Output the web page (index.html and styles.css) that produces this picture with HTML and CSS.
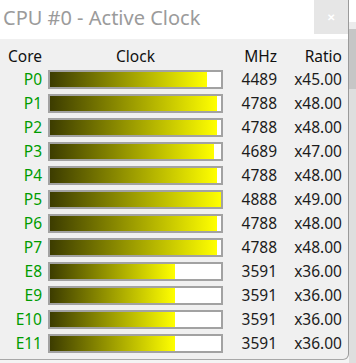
FILE: index.html
```html
<!DOCTYPE html>
<html lang="en">
<head>
    <meta charset="UTF-8">
    <title>CPU #0 - Active Clock</title>
    <link rel="stylesheet" href="styles.css">
</head>
<body>
    <div class="window">
        <div class="titlebar">
            <span class="title">CPU #0 - Active Clock</span>
            <span class="close">&#x2715;</span>
        </div>
        <div class="grid">
            <div class="head core">Core</div>
            <div class="head clock">Clock</div>
            <div class="head num">MHz</div>
            <div class="head num">Ratio</div>

            <div class="core">P0</div>
            <div class="bar"><div class="fill" style="width: 91.6%"></div></div>
            <div class="num">4489</div>
            <div class="num">x45.00</div>

            <div class="core">P1</div>
            <div class="bar"><div class="fill" style="width: 97.7%"></div></div>
            <div class="num">4788</div>
            <div class="num">x48.00</div>

            <div class="core">P2</div>
            <div class="bar"><div class="fill" style="width: 97.7%"></div></div>
            <div class="num">4788</div>
            <div class="num">x48.00</div>

            <div class="core">P3</div>
            <div class="bar"><div class="fill" style="width: 95.7%"></div></div>
            <div class="num">4689</div>
            <div class="num">x47.00</div>

            <div class="core">P4</div>
            <div class="bar"><div class="fill" style="width: 97.7%"></div></div>
            <div class="num">4788</div>
            <div class="num">x48.00</div>

            <div class="core">P5</div>
            <div class="bar"><div class="fill" style="width: 99.8%"></div></div>
            <div class="num">4888</div>
            <div class="num">x49.00</div>

            <div class="core">P6</div>
            <div class="bar"><div class="fill" style="width: 97.7%"></div></div>
            <div class="num">4788</div>
            <div class="num">x48.00</div>

            <div class="core">P7</div>
            <div class="bar"><div class="fill" style="width: 97.7%"></div></div>
            <div class="num">4788</div>
            <div class="num">x48.00</div>

            <div class="core">E8</div>
            <div class="bar"><div class="fill" style="width: 73.3%"></div></div>
            <div class="num">3591</div>
            <div class="num">x36.00</div>

            <div class="core">E9</div>
            <div class="bar"><div class="fill" style="width: 73.3%"></div></div>
            <div class="num">3591</div>
            <div class="num">x36.00</div>

            <div class="core">E10</div>
            <div class="bar"><div class="fill" style="width: 73.3%"></div></div>
            <div class="num">3591</div>
            <div class="num">x36.00</div>

            <div class="core">E11</div>
            <div class="bar"><div class="fill" style="width: 73.3%"></div></div>
            <div class="num">3591</div>
            <div class="num">x36.00</div>
        </div>
    </div>
    <div class="backdrop">
        <div class="backdrop-top"></div>
        <div class="backdrop-line"></div>
        <div class="backdrop-thumb"></div>
        <div class="backdrop-track"></div>
    </div>
</body>
</html>
```

FILE: styles.css
```css
html, body {
    margin: 0;
    height: 100%;
}
body {
    display: flex;
    align-items: flex-start;
    background: #f4f4f4;
    font-family: "Noto Sans", "Open Sans", sans-serif;
    overflow: hidden;
}
.window {
    width: 348px;
    height: 359px;
    flex: none;
    background: #f0f0f0;
    border-right: 1px solid #9a9a9a;
    border-bottom: 1px solid #a8a8a8;
    border-bottom-right-radius: 6px;
}
.titlebar {
    height: 39px;
    background: white;
    display: flex;
    justify-content: space-between;
    align-items: flex-start;
}
.title {
    padding-left: 3px;
    margin-top: 4px;
    font-size: 20px;
    line-height: 28px;
    color: #9b9b9b;
}
.close {
    width: 34px;
    height: 34px;
    background: #e6e6e6;
    color: white;
    font-size: 10px;
    font-weight: bold;
    display: flex;
    justify-content: center;
    align-items: center;
}
.grid {
    display: grid;
    grid-template-columns: 42px 175px 48px 59px;
    grid-template-rows: 23px;
    grid-auto-rows: 24px;
    column-gap: 6px;
    padding-top: 5px;
    font-size: 15.5px;
    color: #1c1c1c;
    align-items: center;
}
.num {
    text-align: right;
}
.core {
    text-align: right;
    color: #009c00;
}
.head,
.head.core {
    color: #111;
}
.clock {
    text-align: center;
}
.bar {
    height: 15px;
    border: 2px solid #a2a2a2;
    background: white;
}
.fill {
    height: 100%;
    background: linear-gradient(to right, #3c3c00, #ffff00);
}
.backdrop {
    flex: 1;
    height: 100%;
    display: flex;
    flex-direction: column;
    background: #e2e2e2;
}
.backdrop-top {
    height: 22px;
    background: white;
}
.backdrop-line {
    height: 7px;
    background: #ececec;
}
.backdrop-thumb {
    height: 60px;
    background: #c6c6c6;
}
.backdrop-track {
    flex: 1;
    background: #dedede;
}
```
